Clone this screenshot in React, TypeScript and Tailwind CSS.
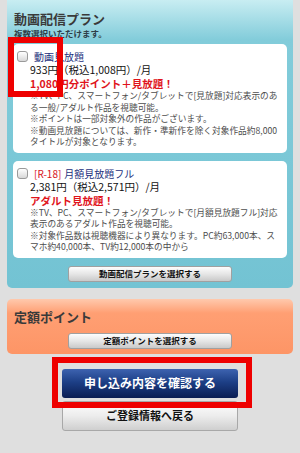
import React from 'react';

function CheckBox() {
  return (
    <span className="inline-block w-[11px] h-[11px] shrink-0 rounded-[3px] border border-[#9a9a9a] bg-[linear-gradient(to_bottom,#ffffff,#d8d8d8)]" />
  );
}

function GrayButton({ label }: { label: string }) {
  return (
    <div className="mx-auto w-[164px] h-[16px] flex items-center justify-center rounded-[3px] border border-[#a0a0a0] bg-[linear-gradient(to_bottom,#fdfdfd,#e6e6e6_50%,#c9c9c9)] text-[8.5px] font-bold text-[#111] leading-none">
      {label}
    </div>
  );
}

interface PlanCardProps {
  tag?: string;
  title: string;
  price: string;
  promo: string;
  lines: string[];
}

function PlanCard({ tag, title, price, promo, lines }: PlanCardProps) {
  return (
    <div className="bg-white rounded-[5px] pt-[6px] pb-[5px] pl-[17px] pr-[4px]">
      <div className="-ml-[13px] flex items-center gap-[6px] h-[13px]">
        <CheckBox />
        <span className="text-[10px] leading-[13px] text-[#1c2f7c] whitespace-nowrap">
          {tag && <span className="text-[#d8141b] mr-[3px]">{tag}</span>}
          {title}
        </span>
      </div>
      <div className="text-[10.5px] leading-[14px] text-[#111] whitespace-nowrap">{price}</div>
      <div className="text-[10.5px] leading-[13px] font-bold text-[#e0141c] whitespace-nowrap">{promo}</div>
      <div className="text-[8.7px] leading-[11.5px] text-[#4d4d4d]">
        {lines.map((l) => (
          <div key={l} className="whitespace-nowrap">{l}</div>
        ))}
      </div>
    </div>
  );
}

export default function App() {
  return (
    <div className="relative w-[300px] h-[453px] overflow-hidden bg-[#dfdfdf] font-['Noto_Sans_CJK_JP',sans-serif]">
      {/* 動画配信プラン */}
      <div className="mx-[7px] rounded-b-[5px] px-[6px] pb-[6px] bg-[linear-gradient(to_bottom,#c8edf2_0px,#82ccda_40px,#73c3d3_100%)]">
        <div className="pt-[11px] pb-[5px] pl-[1px]">
          <div className="text-[13px] leading-[16px] font-bold text-[#3a3a3a]">動画配信プラン</div>
          <div className="text-[8.5px] leading-[12px] font-bold text-[#2f3f4a]">複数選択いただけます。</div>
        </div>
        <PlanCard
          title="動画見放題"
          price="933円（税込1,008円）/月"
          promo="1,080円分ポイント＋見放題！"
          lines={[
            '※TV、PC、スマートフォン/タブレットで[見放題]対応表示のあ',
            'る一般/アダルト作品を視聴可能。',
            '※ポイントは一部対象外の作品がございます。',
            '※動画見放題については、新作・準新作を除く対象作品約8,000',
            'タイトルが対象となります。',
          ]}
        />
        <div className="mt-[8px]">
          <PlanCard
            tag="[R-18]"
            title="月額見放題フル"
            price="2,381円（税込2,571円）/月"
            promo="アダルト見放題！"
            lines={[
              '※TV、PC、スマートフォン/タブレットで[月額見放題フル]対応',
              '表示のあるアダルト作品を視聴可能。',
              '※対象作品数は視聴機器により異なります。PC約63,000本、ス',
              'マホ約40,000本、TV約12,000本の中から',
            ]}
          />
        </div>
        <div className="mt-[8px]">
          <GrayButton label="動画配信プランを選択する" />
        </div>
      </div>

      {/* 定額ポイント */}
      <div className="mt-[11px] mx-[7px] rounded-[5px] px-[6px] pt-[10px] pb-[5px] bg-[linear-gradient(to_bottom,#ffc9ad_0px,#ff9f73_14px,#fd9566_100%)]">
        <div className="pl-[1px] text-[13px] leading-[16px] font-bold text-[#3a3a3a]">定額ポイント</div>
        <div className="mt-[8px]">
          <GrayButton label="定額ポイントを選択する" />
        </div>
      </div>

      {/* actions */}
      <div className="mt-[15px] mx-auto w-[176px] h-[29px] flex items-center justify-center rounded-[3px] bg-[linear-gradient(to_bottom,#3d63b0,#1d3f86_45%,#0a1d52)] text-white text-[12px] font-bold">
        申し込み内容を確認する
      </div>
      <div className="mt-[3px] mx-auto w-[176px] h-[30px] flex items-center justify-center rounded-[3px] border border-[#a8a8a8] bg-[linear-gradient(to_bottom,#ffffff,#ececec_50%,#cfcfcf)] text-[#111] text-[11px] font-bold">
        ご登録情報へ戻る
      </div>

      {/* annotation boxes */}
      <div className="absolute left-[8px] top-[37px] w-[55px] h-[60px] border-[6px] border-[#ee0000]" />
      <div className="absolute left-[52px] top-[357px] w-[200px] h-[51px] border-[6px] border-[#ee0000]" />
    </div>
  );
}
